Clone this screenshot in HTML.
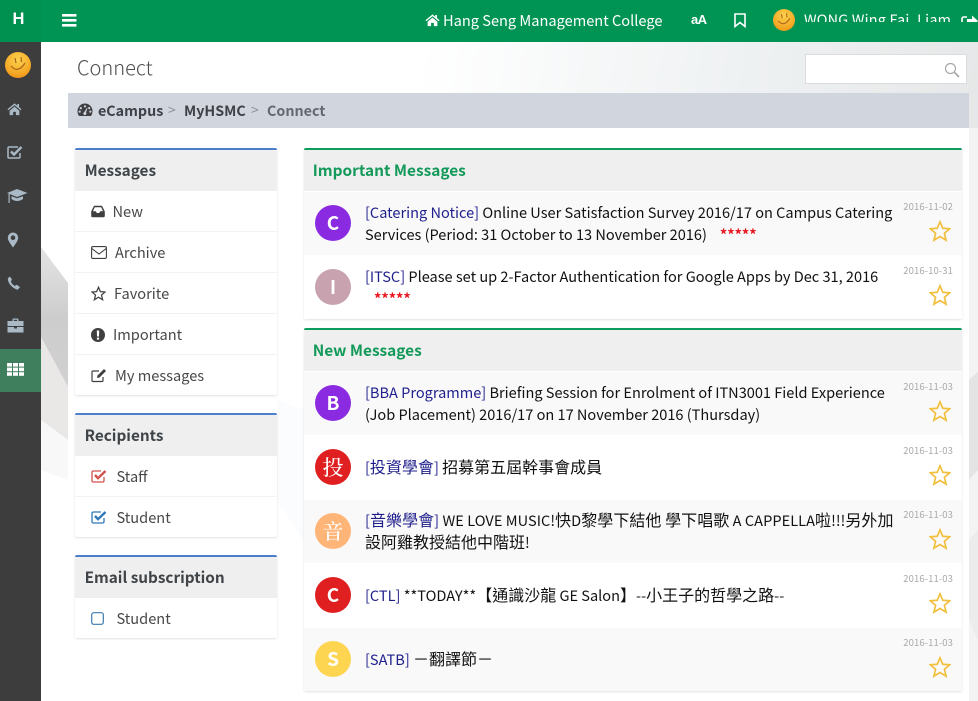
<!DOCTYPE html>
<html><head><meta charset="utf-8">
<style>
html,body{margin:0;padding:0}
body{width:978px;height:701px;position:relative;overflow:hidden;background:#fff;font-family:"Noto Sans CJK TC","Liberation Sans",sans-serif;font-size:15px;color:#111}
.a{position:absolute;white-space:nowrap}
.t{position:absolute;white-space:nowrap;line-height:22px;height:22px}
svg{position:absolute;display:block}
.panel{position:absolute;background:#fff;box-shadow:0 1px 2px rgba(0,0,0,.12);border-radius:2px}
.head{position:absolute;left:0;right:0;background:#efefef;border-radius:2px 2px 0 0}
.row{position:absolute;left:0;right:0}
.sep{position:absolute;left:0;right:0;height:1px;background:#f2f2f2}
.lab{color:#484848;font-size:14.6px}
.ht{font-weight:700;font-size:15.3px;color:#3f4448;line-height:22px;position:absolute;white-space:nowrap}
.gt{font-weight:700;font-size:15.4px;color:#139a5a;line-height:22px;position:absolute;white-space:nowrap;left:8.7px}
.av{position:absolute;left:11px;top:13px;width:36px;height:36px;border-radius:50%;color:#fff;font-weight:700;font-size:19px;line-height:36px;text-align:center}
.d{position:absolute;right:9px;top:8px;font-size:9.5px;line-height:12px;color:#aaa;white-space:nowrap;letter-spacing:.1px}
.m{position:absolute;left:61px;white-space:nowrap;line-height:22px;font-size:14.55px;color:#111}
.m b{font-weight:400;color:#1f1f8c}
.r{color:#e8141c;font-weight:700;font-size:14.5px;letter-spacing:0}
.star{position:absolute;right:11px;top:28px}
.c{font-family:"WenQuanYi Zen Hei","Noto Sans CJK TC",sans-serif;font-size:16px}
</style></head>
<body>
<!-- background shapes -->
<div class="a" style="left:41px;top:42px;width:937px;height:86px;background:linear-gradient(100deg,#fff 40%,#eef1f2 75%,#e6e7e8 100%)"></div>
<svg style="left:0;top:0" width="978" height="701" viewBox="0 0 978 701">
<defs><linearGradient id="tri" x1="0" y1="0" x2="0" y2="1"><stop offset="0" stop-color="#e4e4e4"/><stop offset=".5" stop-color="#cdcdcd"/><stop offset="1" stop-color="#d2d0d0"/></linearGradient></defs>
<polygon points="41,247 68,283 68,387 41,337" fill="url(#tri)"/>
<polygon points="41,337 68,387 68,440 41,420" fill="#eae7e7"/>
<polygon points="41,420 68,440 68,480 41,470" fill="#f8f8f8"/>
<polygon points="969,128 978,128 978,701 969,701" fill="#f3f3f3"/>
<polygon points="969,380 978,372 978,470 969,480" fill="#e4e4e4"/>
<polygon points="969,540 978,530 978,640 969,620" fill="#ececec"/>
<polygon points="277,400 304,410 304,540 277,500" fill="#fbfcfe"/>
</svg>

<!-- header -->
<div class="a" style="left:0;top:0;width:978px;height:42px;background:#009454"></div>
<div class="a" style="left:0;top:0;width:41px;height:42px;background:#00904f"></div>
<div class="a" style="left:0;top:0;width:37px;height:39px;line-height:38px;text-align:center;color:#fff;font-weight:700;font-size:16.5px;font-family:'Liberation Sans',sans-serif">H</div>
<svg style="left:62px;top:14px" width="15" height="13" viewBox="0 0 15 13" fill="#fff"><rect y="0" width="14.5" height="2.6" rx=".6"/><rect y="5" width="14.5" height="2.6" rx=".6"/><rect y="10" width="14.5" height="2.6" rx=".6"/></svg>
<svg style="left:425px;top:13px" width="15" height="14" viewBox="0 0 16 14" fill="#fff"><path d="M8 1 0.5 7.2 1.4 8.3 8 3 14.6 8.3 15.5 7.2 12.8 5V1.6H11V3.5Z"/><path d="M2.8 8.8 8 4.5 13.2 8.8V13.5H9.5V10H6.5V13.5H2.8Z"/></svg>
<div class="a" style="left:443px;top:10px;line-height:22px;font-size:14.6px;color:#fff">Hang Seng Management College</div>
<div class="a" style="left:691px;top:9px;line-height:21px;font-size:13px;font-weight:700;color:#fff;font-family:'Liberation Sans',sans-serif;letter-spacing:-.6px">aA</div>
<svg style="left:734px;top:13px" width="12" height="15" viewBox="0 0 12 15" fill="none" stroke="#fff" stroke-width="1.6"><path d="M1 1H11V13.5L6 9.5 1 13.5Z"/></svg>
<svg style="left:773px;top:9px" width="22" height="22" viewBox="0 0 26 26"><defs><radialGradient id="sm" cx=".5" cy=".3" r=".8"><stop offset="0" stop-color="#fbd14e"/><stop offset=".7" stop-color="#f5a623"/><stop offset="1" stop-color="#e98a15"/></radialGradient></defs><circle cx="13" cy="13" r="13" fill="url(#sm)"/><path d="M6 14Q13 22 20 11" fill="none" stroke="#a8651a" stroke-width="1.2"/><path d="M10 6 11 11M16 5 16.5 10" stroke="#a8651a" stroke-width="1.2"/></svg>
<div class="a" style="left:804px;top:0;height:22px;overflow:hidden;width:150px"><div style="line-height:40px;font-size:14.4px;color:#fff;letter-spacing:.2px;white-space:nowrap">WONG Wing Fai, Liam</div></div>
<div class="a" style="left:961px;top:0;width:17px;height:22px;overflow:hidden"><svg style="left:0;top:14px" width="17" height="13" viewBox="0 0 17 13"><path d="M1 12V5Q1 3 3 3H6" fill="none" stroke="#fff" stroke-width="1.6"/><path d="M6 5H11V1.5L17 7 11 12.5V9H6Z" fill="#fff"/></svg></div>

<!-- sidebar -->
<div class="a" style="left:0;top:42px;width:41px;height:659px;background:#3d3d3d"></div>
<div class="a" style="left:0;top:349px;width:41px;height:43px;background:#3f7f5d"></div>
<svg style="left:5px;top:52px" width="26" height="26" viewBox="0 0 26 26"><circle cx="13" cy="13" r="13" fill="url(#sm)"/><path d="M6 14Q13 22 20 11" fill="none" stroke="#a8651a" stroke-width="1.2"/><path d="M10 6 11 11M16 5 16.5 10" stroke="#a8651a" stroke-width="1.2"/></svg>
<svg style="left:7px;top:102px" width="15" height="14" viewBox="0 0 16 14" fill="#a9bac6"><path d="M8 1 0.5 7.2 1.4 8.3 8 3 14.6 8.3 15.5 7.2 12.8 5V1.6H11V3.5Z"/><path d="M2.8 8.8 8 4.5 13.2 8.8V13.5H9.5V10H6.5V13.5H2.8Z"/></svg>
<svg style="left:7px;top:145px" width="16" height="14" viewBox="0 0 16 14" fill="none" stroke="#a9bac6"><path d="M13 8V12Q13 13 12 13H2Q1 13 1 12V3Q1 2 2 2H11" stroke-width="1.5"/><path d="M4 6.5 7 9.5 14.5 2" stroke-width="2.4"/></svg>
<svg style="left:7px;top:188px" width="21" height="16" viewBox="0 0 21 16" fill="#a9bac6"><path d="M10 1 20.5 5 10 9 0 5Z"/><path d="M4.5 8.2 10 10.3 16 8.2V11Q10 15 4.5 11Z"/><rect x="1.5" y="6" width="1.2" height="9"/></svg>
<svg style="left:7px;top:232px" width="12" height="16" viewBox="0 0 12 16"><path fill-rule="evenodd" fill="#a9bac6" d="M6 0.5A5.2 5.2 0 0 1 11.2 5.7C11.2 8.6 8 12.5 6 15.5 4 12.5.8 8.6.8 5.7A5.2 5.2 0 0 1 6 .5ZM6 3.4A2.3 2.3 0 1 0 6 8 2.3 2.3 0 1 0 6 3.4Z"/></svg>
<svg style="left:7px;top:276px" width="13" height="14" viewBox="0 0 13 14" fill="#a9bac6"><path d="M3 .5 5 3.8 3.8 5.5Q5 8.5 8 10L9.7 8.8 13 11 11 13.5Q9.5 14 6 11.5 1.5 8 .8 3.5 1 1.5 3 .5Z"/></svg>
<svg style="left:7px;top:318px" width="17" height="15" viewBox="0 0 17 15" fill="#a9bac6"><path fill-rule="evenodd" d="M5.5 3V1.6Q5.5.5 6.6.5H10.4Q11.5.5 11.5 1.6V3H16.5V8H.5V3ZM6.8 3H10.2V1.8H6.8Z"/><path d="M.5 9H7V10.5H10V9H16.5V14.5H.5Z"/></svg>
<svg style="left:7px;top:363px" width="17" height="13" viewBox="0 0 17 13" fill="#fff"><rect width="5" height="3.6"/><rect x="6" width="5" height="3.6"/><rect x="12" width="5" height="3.6"/><rect y="4.6" width="5" height="3.6"/><rect x="6" y="4.6" width="5" height="3.6"/><rect x="12" y="4.6" width="5" height="3.6"/><rect y="9.2" width="5" height="3.6"/><rect x="6" y="9.2" width="5" height="3.6"/><rect x="12" y="9.2" width="5" height="3.6"/></svg>

<!-- title and search -->
<div class="a" style="left:77px;top:51px;line-height:32px;font-size:20px;color:#4f4f4f;font-weight:300">Connect</div>
<div class="a" style="left:805px;top:54px;width:160px;height:28px;background:#fff;border:1px solid #dcdcdc"></div>
<svg style="left:944px;top:62px" width="16" height="16" viewBox="0 0 16 16" fill="none" stroke="#a8a8a8"><circle cx="6.5" cy="6.5" r="5" stroke-width="1.2"/><path d="M10.5 10.5 15 15" stroke-width="1.8"/></svg>

<!-- breadcrumb -->
<div class="a" style="left:68px;top:93px;width:901px;height:35px;background:#d1d5de"></div>
<svg style="left:77px;top:103px" width="16" height="14" viewBox="0 0 16 14"><path fill-rule="evenodd" fill="#3f3f44" d="M8 .5A7.5 7.5 0 0 1 15.5 8C15.5 10 15 11.5 14 13H2C1 11.5.5 10 .5 8A7.5 7.5 0 0 1 8 .5ZM8 2.2A1.1 1.1 0 1 0 8 4.4 1.1 1.1 0 1 0 8 2.2ZM3.8 4A1.1 1.1 0 1 0 3.8 6.2 1.1 1.1 0 1 0 3.8 4ZM12.2 4A1.1 1.1 0 1 0 12.2 6.2 1.1 1.1 0 1 0 12.2 4ZM2.7 7.5A1.1 1.1 0 1 0 2.7 9.7 1.1 1.1 0 1 0 2.7 7.5ZM13.3 7.5A1.1 1.1 0 1 0 13.3 9.7 1.1 1.1 0 1 0 13.3 7.5ZM7.2 9.2A1.5 1.5 0 1 0 9 9.6L10.5 5 10 4.8Z"/></svg>
<div class="t" style="left:98px;top:100px;font-weight:700;font-size:14.3px;color:#3f4146">eCampus</div>
<div class="t" style="left:168px;top:99px;font-size:14px;color:#8f949c">&gt;</div>
<div class="t" style="left:184px;top:100px;font-weight:700;font-size:14.3px;color:#3f4146">MyHSMC</div>
<div class="t" style="left:251px;top:99px;font-size:14px;color:#8f949c">&gt;</div>
<div class="t" style="left:267px;top:100px;font-weight:700;font-size:14.3px;color:#65686e">Connect</div>

<!-- left: Messages -->
<div class="panel" style="left:75px;top:148px;width:202px;height:247px;border-top:2px solid #4d7ecb;box-sizing:border-box">
  <div class="head" style="top:0;height:41px"></div>
  <div class="ht" style="left:9.6px;top:9px">Messages</div>
  <div class="sep" style="top:81px"></div><div class="sep" style="top:122px"></div><div class="sep" style="top:163px"></div><div class="sep" style="top:204px"></div>
  <div class="t lab" style="left:37.5px;top:51px">New</div>
  <div class="t lab" style="left:40px;top:92px">Archive</div>
  <div class="t lab" style="left:39px;top:133px">Favorite</div>
  <div class="t lab" style="left:38px;top:174px">Important</div>
  <div class="t lab" style="left:40px;top:215px">My messages</div>
  <svg style="left:16px;top:55px" width="14" height="13" viewBox="0 0 14 13"><path fill-rule="evenodd" fill="#3f3f3f" d="M3 .8H11L13.8 6.5V11Q13.8 12.2 12.6 12.2H1.4Q.2 12.2.2 11V6.5ZM3.8 2.2 2 6.2H4.8L5.8 8H8.2L9.2 6.2H12L10.2 2.2Z"/></svg>
  <svg style="left:16px;top:96px" width="16" height="13" viewBox="0 0 16 13" fill="none" stroke="#3f3f3f" stroke-width="1.1"><rect x=".6" y=".6" width="14.8" height="11.8" rx="1.3"/><path d="M.8 2.5 8 8 15.2 2.5"/></svg>
  <svg style="left:16px;top:136px" width="15" height="15" viewBox="0 0 24 24" fill="none" stroke="#3f3f3f" stroke-width="2"><path d="M12 2 15 9 22.5 9.6 16.8 14.5 18.6 22 12 18 5.4 22 7.2 14.5 1.5 9.6 9 9Z"/></svg>
  <svg style="left:16px;top:178px" width="14" height="14" viewBox="0 0 14 14"><path fill-rule="evenodd" fill="#3f3f3f" d="M7 0A7 7 0 1 1 7 14 7 7 0 1 1 7 0ZM5.8 2.5 6 8.5H8L8.2 2.5ZM5.9 9.6V11.6H8.1V9.6Z"/></svg>
  <svg style="left:16px;top:218px" width="16" height="15" viewBox="0 0 16 15" fill="none" stroke="#3f3f3f" stroke-width="1.2"><path d="M12 9V12.5Q12 13.5 11 13.5H2Q1 13.5 1 12.5V4Q1 3 2 3H8"/><path d="M6 10 6.4 7.6 13 1 15 3 8.4 9.6Z" fill="#3f3f3f" stroke="none"/></svg>
</div>

<!-- left: Recipients -->
<div class="panel" style="left:75px;top:413px;width:202px;height:124px;border-top:2px solid #4d7ecb;box-sizing:border-box">
  <div class="head" style="top:0;height:41px"></div>
  <div class="ht" style="left:9.6px;top:9px">Recipients</div>
  <div class="sep" style="top:81px"></div>
  <div class="t lab" style="left:41.5px;top:51px">Staff</div>
  <div class="t lab" style="left:41.5px;top:92px">Student</div>
  <svg style="left:16px;top:54px" width="16" height="14" viewBox="0 0 16 14" fill="none" stroke="#d2524e"><path d="M13 8V11.5Q13 13 11.5 13H2.5Q1 13 1 11.5V3.5Q1 2 2.5 2H10" stroke-width="1.3"/><path d="M4 6 7 9.2 14.5 2" stroke-width="2.4"/></svg>
  <svg style="left:16px;top:95px" width="16" height="14" viewBox="0 0 16 14" fill="none" stroke="#2e78b8"><path d="M13 8V11.5Q13 13 11.5 13H2.5Q1 13 1 11.5V3.5Q1 2 2.5 2H10" stroke-width="1.3"/><path d="M4 6 7 9.2 14.5 2" stroke-width="2.4"/></svg>
</div>

<!-- left: Email -->
<div class="panel" style="left:75px;top:555px;width:202px;height:83px;border-top:2px solid #4d7ecb;box-sizing:border-box">
  <div class="head" style="top:0;height:41px"></div>
  <div class="ht" style="left:9.6px;top:9px">Email subscription</div>
  <div class="t lab" style="left:41.5px;top:51px">Student</div>
  <svg style="left:16px;top:55px" width="13" height="13" viewBox="0 0 13 13" fill="none" stroke="#3d78ad" stroke-width="1.2"><rect x=".7" y=".7" width="11.6" height="11.6" rx="2"/></svg>
</div>

<!-- Important -->
<svg width="0" height="0" style="left:0;top:0"><defs><path id="st" d="M12 2 15 9 22.5 9.6 16.8 14.5 18.6 22 12 18 5.4 22 7.2 14.5 1.5 9.6 9 9Z" fill="none" stroke="#f2c040" stroke-width="1.9"/></defs></svg>
<div class="panel" style="left:304px;top:148px;width:658px;height:171px;border-top:2px solid #0d9c5c;box-sizing:border-box">
  <div class="head" style="top:0;height:41px"></div>
  <div class="gt" style="top:9px">Important Messages</div>
  <div class="row" style="top:42px;height:63px;background:#f9f9f9">
    <div class="av" style="background:#8a2be2">C</div>
    <div class="m" style="top:10px"><b>[Catering Notice]</b> Online User Satisfaction Survey 2016/17 on Campus Catering</div>
    <div class="m" style="top:32px">Services (Period: 31 October to 13 November 2016)<span class="r" style="margin-left:13px">*****</span></div>
    <div class="d">2016-11-02</div>
    <svg class="star" width="22" height="22" viewBox="0 0 24 24"><use href="#st"/></svg>
  </div>
  <div class="row" style="top:106px;height:63px;background:#fff">
    <div class="av" style="background:#c8a2ae">I</div>
    <div class="m" style="top:10px"><b>[ITSC]</b> Please set up 2-Factor Authentication for Google Apps by Dec 31, 2016</div>
    <div class="m r" style="top:32px;left:70px;color:#e8141c;font-size:14.5px">*****</div>
    <div class="d">2016-10-31</div>
    <svg class="star" width="22" height="22" viewBox="0 0 24 24"><use href="#st"/></svg>
  </div>
</div>

<!-- New -->
<div class="panel" style="left:304px;top:328px;width:658px;height:363px;border-top:2px solid #0d9c5c;box-sizing:border-box">
  <div class="head" style="top:0;height:41px"></div>
  <div class="gt" style="top:9px">New Messages</div>
  <div class="row" style="top:42px;height:63px;background:#f9f9f9">
    <div class="av" style="background:#8a2be2">B</div>
    <div class="m" style="top:10px"><b>[BBA Programme]</b> Briefing Session for Enrolment of ITN3001 Field Experience</div>
    <div class="m" style="top:32px">(Job Placement) 2016/17 on 17 November 2016 (Thursday)</div>
    <div class="d">2016-11-03</div>
    <svg class="star" width="22" height="22" viewBox="0 0 24 24"><use href="#st"/></svg>
  </div>
  <div class="row" style="top:106px;height:63px;background:#fff">
    <div class="av" style="background:#e02020;font-family:'Noto Serif CJK SC',serif;font-weight:500;font-size:21px">投</div>
    <div class="m" style="top:19px"><b>[<span class="c">投資學會</span>]</b> <span class="c">招募第五屆幹事會成員</span></div>
    <div class="d">2016-11-03</div>
    <svg class="star" width="22" height="22" viewBox="0 0 24 24"><use href="#st"/></svg>
  </div>
  <div class="row" style="top:170px;height:63px;background:#f9f9f9">
    <div class="av" style="background:#ffb578;font-family:'Noto Serif CJK SC',serif;font-weight:500;font-size:21px">音</div>
    <div class="m" style="top:8px;letter-spacing:.05px"><b>[<span class="c">音樂學會</span>]</b> WE LOVE MUSIC!<span class="c">快</span>D<span class="c">黎學下結他 學下唱歌</span> A CAPPELLA<span class="c">啦</span>!!!<span class="c">另外加</span></div>
    <div class="m" style="top:30px"><span class="c">設阿雞教授結他中階班</span>!</div>
    <div class="d">2016-11-03</div>
    <svg class="star" width="22" height="22" viewBox="0 0 24 24"><use href="#st"/></svg>
  </div>
  <div class="row" style="top:234px;height:63px;background:#fff">
    <div class="av" style="background:#e02020">C</div>
    <div class="m" style="top:19px"><b>[CTL]</b> **TODAY**<span class="c">【通識沙龍</span> GE Salon<span class="c">】</span>--<span class="c">小王子的哲學之路</span>--</div>
    <div class="d">2016-11-03</div>
    <svg class="star" width="22" height="22" viewBox="0 0 24 24"><use href="#st"/></svg>
  </div>
  <div class="row" style="top:298px;height:63px;background:#f9f9f9">
    <div class="av" style="background:#fdd550">S</div>
    <div class="m" style="top:19px"><b>[SATB]</b> <span class="c">－翻譯節－</span></div>
    <div class="d">2016-11-03</div>
    <svg class="star" width="22" height="22" viewBox="0 0 24 24"><use href="#st"/></svg>
  </div>
</div>
</body></html>
